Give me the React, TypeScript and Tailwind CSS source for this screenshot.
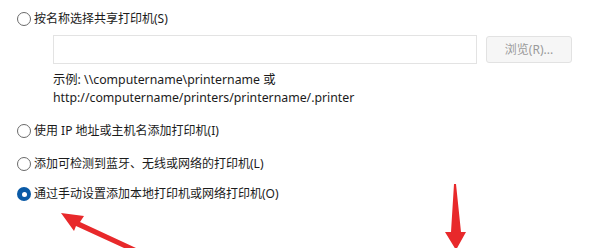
function Radio({ checked = false }: { checked?: boolean }) {
  if (checked) {
    return (
      <span className="flex-none w-[14px] h-[14px] rounded-full bg-[#0a5aa6] flex items-center justify-center">
        <span className="w-[5px] h-[5px] rounded-full bg-white" />
      </span>
    );
  }
  return <span className="flex-none w-[14px] h-[14px] rounded-full border border-[#6a6a6a] bg-white" />;
}

function Option({ label, checked, className }: { label: string; checked?: boolean; className?: string }) {
  return (
    <div className={`flex items-center gap-[3px] h-[14px] ${className ?? ''}`}>
      <Radio checked={checked} />
      <span className="leading-none whitespace-nowrap">{label}</span>
    </div>
  );
}

function Arrows() {
  return (
    <svg className="absolute inset-0 pointer-events-none" width="592" height="248" viewBox="0 0 592 248">
      <polygon points="61,213 84,216 80,222 136,248 124,248 76,226 74,231" fill="#e8292b" />
      <polygon points="454,184 456,184 461,232 466,232 456,250 445,232 451,232" fill="#e8292b" />
    </svg>
  );
}

export default function App() {
  return (
    <div className="relative w-[592px] h-[248px] overflow-hidden bg-white text-[#1b1b1b] text-[12px] font-['Noto_Sans','Noto_Sans_CJK_SC',sans-serif]">
      <div className="flex flex-col pt-[12px] pl-[17px]">
        <Option label="按名称选择共享打印机(S)" />
        <div className="ml-[36px] mt-[9px] flex items-start gap-[9px]">
          <div className="w-[424px] h-[29px] border border-[#e3e3e3] bg-white" />
          <div className="mt-[1px] w-[86px] h-[27px] rounded-[3px] border border-[#e2e2e2] bg-[#f6f6f6] flex items-center justify-center text-[#9a9a9a] text-[12px]">
            浏览(R)...
          </div>
        </div>
        <div className="ml-[36px] mt-[7px] leading-[18px] text-[12.3px]">
          <p>示例: \\computername\printername 或</p>
          <p>http://computername/printers/printername/.printer</p>
        </div>
        <Option className="mt-[17px]" label="使用 IP 地址或主机名添加打印机(I)" />
        <Option className="mt-[19px]" label="添加可检测到蓝牙、无线或网络的打印机(L)" />
        <Option className="mt-[16px]" checked label="通过手动设置添加本地打印机或网络打印机(O)" />
      </div>
      <Arrows />
    </div>
  );
}
